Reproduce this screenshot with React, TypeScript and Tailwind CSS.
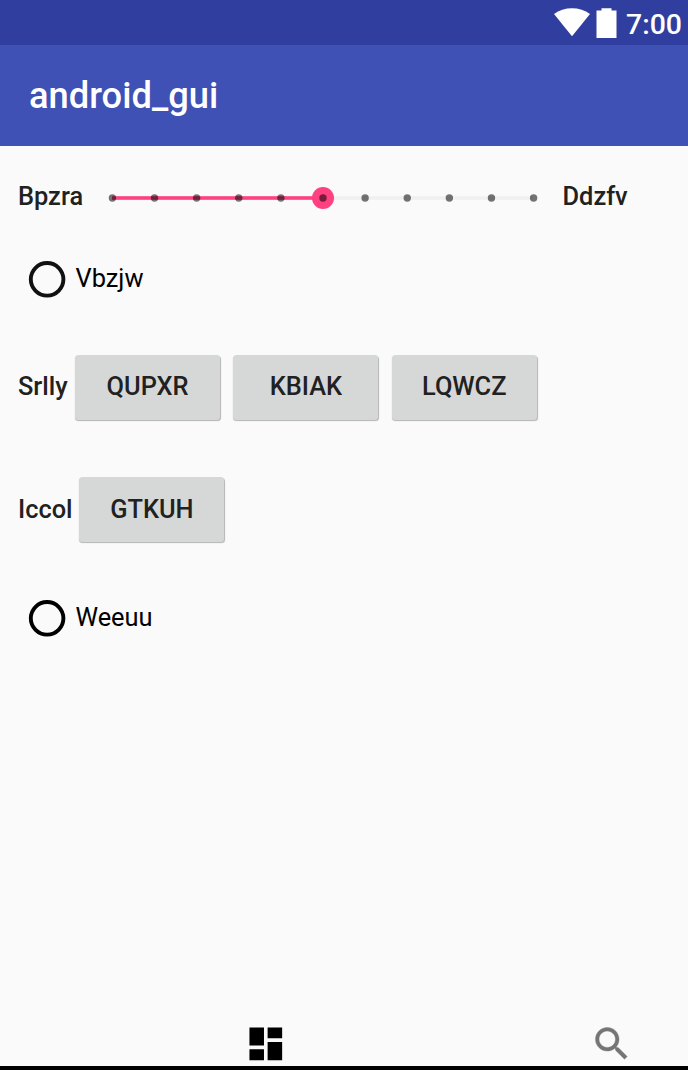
import React from "react";

const TICKS = Array.from({ length: 11 }, (_, i) => i);

function Label({ children, className = "" }: { children: React.ReactNode; className?: string }) {
  return (
    <span className={`shrink-0 text-[25.4px] leading-[30px] font-medium whitespace-nowrap text-[#212121] ${className}`}>
      {children}
    </span>
  );
}

function RaisedButton({ children, className = "pb-px" }: { children: React.ReactNode; className?: string }) {
  return (
    <button className={`h-[65px] w-[145px] shrink-0 rounded-[3.5px] bg-[#d6d8d7] text-center text-[25.4px] leading-[30px] font-medium text-[#212121] shadow-[0.5px_1px_1px_rgba(0,0,0,0.28)] ${className}`}>
      {children}
    </button>
  );
}

function RadioRow({ label, tone }: { label: string; tone: string }) {
  return (
    <label className="flex items-center pl-[28px]">
      <svg className={`shrink-0 ${tone}`} width="38" height="38" viewBox="0 0 38 38" fill="none">
        <circle cx="19.1" cy="19.3" r="16.3" stroke="currentColor" strokeWidth="3.9" />
      </svg>
      <span className="ml-[9.5px] pb-[2px] text-[25.4px] leading-[30px] text-black">{label}</span>
    </label>
  );
}

function StepSlider() {
  return (
    <svg className="ml-[18px] shrink-0" width="441" height="30" viewBox="0 0 441 30" role="img">
      <rect x="11" y="13.2" width="421" height="3.6" fill="#f0f0f0" />
      <rect x="11" y="13.2" width="211" height="3.6" fill="#ff4081" />
      <circle cx="222" cy="15" r="11" fill="#ff4081" />
      {TICKS.map((i) => (
        <circle key={i} cx={11.4 + i * 42.12} cy="15" r="3.7" fill="#000" fillOpacity="0.54" />
      ))}
    </svg>
  );
}

export default function App() {
  return (
    <div className="flex h-[1070px] w-[688px] flex-col overflow-hidden bg-[#fafafa] font-['Roboto','Noto_Sans',sans-serif]">
      <header className="shrink-0 text-white">
        <div className="flex h-[45px] items-center justify-end bg-[#303f9f] pr-[6px]">
          <svg width="64" height="32" viewBox="0 0 64 32" fill="#fff">
            <path d="M0 7C5 3 11.300 1.200 18 1.200s13 1.800 18 5.800L18 29.200z" />
            <path d="M47.500 1.300h10v2.300h5v27.500H42.500V3.600h5z" />
          </svg>
          <span className="mt-[5px] ml-[8px] text-[28.400px] leading-[34px] font-medium">7:00</span>
        </div>
        <div className="flex h-[101px] items-center bg-[#3f51b5] pl-[29px]">
          <h1 className="text-[36.300px] leading-[44px] font-medium">android_gui</h1>
        </div>
      </header>
      <main className="flex grow flex-col">
        <div className="flex h-[104px] items-center pl-[18px]">
          <Label className="w-[65px] pb-[4px]">Bpzra</Label>
          <StepSlider />
          <Label className="ml-[20.500px] pb-[4px]">Ddzfv</Label>
        </div>
        <div className="flex h-[58px] items-center">
          <RadioRow label="Vbzjw" tone="text-[#111]" />
        </div>
        <div className="flex h-[158px] items-center pl-[18px]">
          <Label className="w-[57px] pb-[3px]">Srlly</Label>
          <div className="flex gap-[13.400px]">
            <RaisedButton className="pb-[3px]">QUPXR</RaisedButton>
            <RaisedButton className="pb-[3px]">KBIAK</RaisedButton>
            <RaisedButton className="pb-[3px]">LQWCZ</RaisedButton>
          </div>
        </div>
        <div className="flex h-[87px] items-center pl-[18px]">
          <Label className="w-[61.400px] pb-px">Iccol</Label>
          <RaisedButton>GTKUH</RaisedButton>
        </div>
        <div className="flex h-[129px] items-center">
          <RadioRow label="Weeuu" tone="text-black" />
        </div>
      </main>
      <nav className="flex h-[43.500px] shrink-0 justify-between pr-[54px] pl-[244.300px]">
        <svg className="mt-[0.3px]" width="43.600" height="43.600" viewBox="0 0 24 24" fill="#000">
          <path d="M3 13h8V3H3v10zm0 8h8v-6H3v6zm10 0h8V11h-8v10zm0-18v6h8V3h-8z" />
        </svg>
        <svg className="mt-[0.3px]" width="43.600" height="43.600" viewBox="0 0 24 24" fill="#757575" stroke="#757575" strokeWidth="0.2">
          <path d="M15.500 14h-.79l-.28-.27C15.410 12.590 16 11.110 16 9.500 16 5.910 13.090 3 9.500 3S3 5.910 3 9.500 5.910 16 9.500 16c1.610 0 3.090-.59 4.230-1.570l.27.28v.79l5 4.990L20.490 19l-4.990-5zm-6 0C7.010 14 5 11.990 5 9.500S7.010 5 9.500 5 14 7.010 14 9.500 11.990 14 9.500 14z" />
        </svg>
      </nav>
      <div className="h-[4.500px] shrink-0 bg-black" />
    </div>
  );
}
